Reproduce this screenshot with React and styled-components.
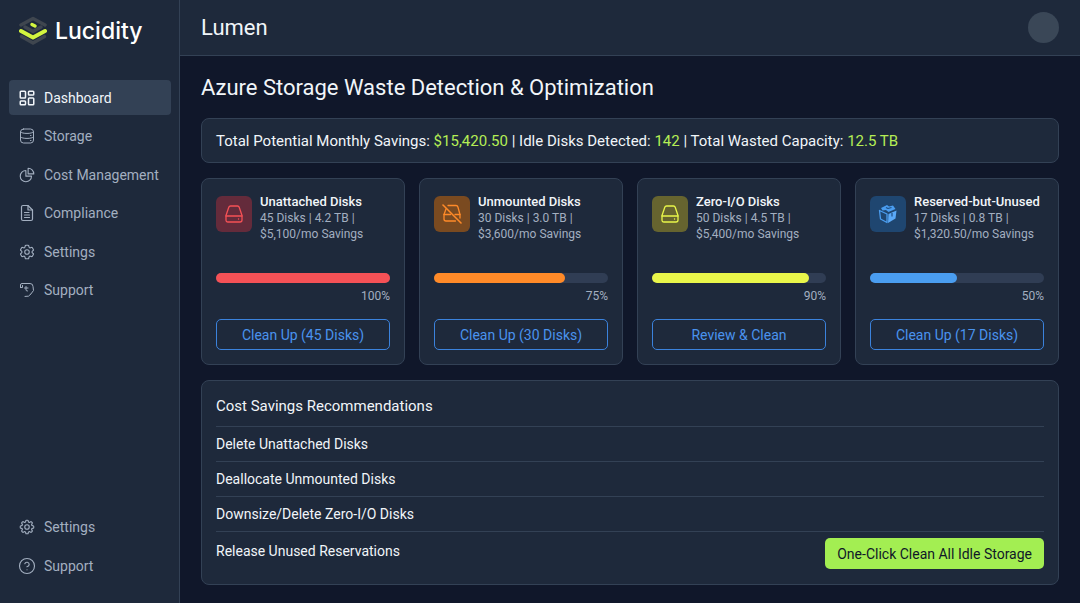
import React from 'react'
import styled, { createGlobalStyle } from 'styled-components';
import { LayoutDashboard, CircleHelp } from 'lucide-react';
import { HiOutlineChartPie, HiOutlineCog6Tooth, HiOutlineCog8Tooth } from 'react-icons/hi2';

const LogoMark = () => (
    <svg width='28' height='30' viewBox='0 0 28 30' fill='none' strokeLinecap='round' strokeLinejoin='round' aria-hidden='true'>
        <path d='M2 9 L14 2.5 L26 9' stroke='#3f464f' strokeWidth='3.5' />
        <path d='M6 11 L14 15.5 L22 11' stroke='#3f464f' strokeWidth='3.5' />
        <path d='M2.500 20.500 L14 27 L25.500 20.500' stroke='#3f464f' strokeWidth='3.5' />
        <path d='M13 8.500 L16 10' stroke='#d3f53f' strokeWidth='3.500' />
        <path d='M2 15 L14 21.500 L26 15' stroke='#d3f53f' strokeWidth='4' />
    </svg>
)

const StorageIcon = () => (
    <svg width='16' height='16' viewBox='0 0 16 16' fill='none' stroke='currentColor' strokeLinecap='round' aria-hidden='true'>
        <rect x='1.500' y='1' width='13' height='14' rx='3' />
        <path d='M1.500 4 C3 6 13 6 14.500 4' />
        <path d='M1.500 9 C3 11 13 11 14.500 9 M11.500 7.500 h.5 M11.500 12.500 h.5' />
    </svg>
)

const DocumentIcon = () => (
    <svg width='14' height='18' viewBox='0 0 14 18' fill='none' stroke='currentColor' strokeWidth='1.2' strokeLinecap='round' strokeLinejoin='round' aria-hidden='true'>
        <path d='M8 1.500 H3 Q1.500 1.500 1.500 3 V15 Q1.500 16.500 3 16.500 H11 Q12.500 16.500 12.500 15 V6 Z' />
        <path d='M8 1.500 V6 H12.500 M4.500 8.500 H9 M4.500 11 H9.500 M4.500 13.500 H9.500' />
    </svg>
)

const HeadsetIcon = () => (
    <svg width='16' height='16' viewBox='0 0 16 16' fill='none' stroke='currentColor' strokeLinecap='round' strokeLinejoin='round' aria-hidden='true'>
        <path d='M1.500 5.500 V3 Q1.500 1.500 3 1.500 H11 Q14 1.500 14 4.500 L14.500 8.500 L11.500 12.500' />
        <path d='M1.500 5.500 H3.500 V3.500 M7 4.500 V8 Q7 9 8.500 9 M5.500 6 H9' />
        <path d='M11.500 12.500 Q10.500 15 6 14.500' />
    </svg>
)

const DriveIcon = () => (
    <svg width='18' height='18' viewBox='0 0 18 18' fill='none' stroke='currentColor' strokeWidth='1.300' strokeLinecap='round' strokeLinejoin='round' aria-hidden='true'>
        <path d='M5.500 1 H12.500 Q13.800 1 14.200 2.200 L17 10.500 V15 Q17 17 15 17 H3 Q1 17 1 15 V10.500 L3.800 2.200 Q4.200 1 5.500 1 Z' />
        <path d='M1 11 H17 M13.500 14 h.1' />
    </svg>
)

const DriveOffIcon = () => (
    <svg width='20' height='20' viewBox='0 0 20 20' fill='none' stroke='currentColor' strokeWidth='1.300' strokeLinecap='round' strokeLinejoin='round' aria-hidden='true'>
        <path d='M1 1 L19 19' strokeWidth='1.600' />
        <path d='M6 1.500 H14 Q15.500 1.500 15.900 3 L18 10.500 V14' />
        <path d='M4 5 L2 10.500 V15 Q2 17 4 17 H13.500' />
        <path d='M2 10.500 H8.500 M13 10.500 H18' />
    </svg>
)

const CubeIcon = () => (
    <svg width='20' height='20' viewBox='0 0 20 20' fill='none' strokeLinejoin='round' aria-hidden='true'>
        <path d='M1.500 6.500 L9 10 V18.500 L2.500 15 Z' stroke='#4a9df0' strokeWidth='1.300' />
        <path d='M10.500 10 L18.500 6.500 L17.500 14.500 L10 19 Z' fill='#5aa9f8' />
        <path d='M3 4 L9 1 L11 2.500 L15 1.500 L17.500 5 L10.500 8 L8 6 L4.500 6.500 Z' fill='#4a9df0' />
        <path d='M8 3.500 L10 4.500 L13.500 3.500 M14 9 V12.500' stroke='#1f4f85' strokeWidth='1.200' />
    </svg>
)

const mainLinks = [
    { label: 'Dashboard', icon: <LayoutDashboard size={18} strokeWidth={2} />, active: true },
    { label: 'Storage', icon: <StorageIcon /> },
    { label: 'Cost Management', icon: <HiOutlineChartPie size={18} /> },
    { label: 'Compliance', icon: <DocumentIcon /> },
    { label: 'Settings', icon: <HiOutlineCog6Tooth size={18} /> },
    { label: 'Support', icon: <HeadsetIcon /> },
];

const footerLinks = [
    { label: 'Settings', icon: <HiOutlineCog8Tooth size={18} /> },
    { label: 'Support', icon: <CircleHelp size={18} strokeWidth={1.5} /> },
];

const wasteCards = [
    { title: 'Unattached Disks', disks: 45, size: '4.2 TB', savings: '$5,100', percent: 100, action: 'Clean Up (45 Disks)', color: '#f55156', tile: '#642b3b', icon: <DriveIcon /> },
    { title: 'Unmounted Disks', disks: 30, size: '3.0 TB', savings: '$3,600', percent: 75, action: 'Clean Up (30 Disks)', color: '#ff8a28', tile: '#7a4a20', icon: <DriveOffIcon /> },
    { title: 'Zero-I/O Disks', disks: 50, size: '4.5 TB', savings: '$5,400', percent: 90, action: 'Review & Clean', color: '#e9f64a', tile: '#66642f', icon: <DriveIcon /> },
    { title: 'Reserved-but-Unused', disks: 17, size: '0.8 TB', savings: '$1,320.50', percent: 50, action: 'Clean Up (17 Disks)', color: '#4a9df0', tile: '#1f4670', icon: <CubeIcon /> },
];

const recommendations = [
    'Delete Unattached Disks',
    'Deallocate Unmounted Disks',
    'Downsize/Delete Zero-I/O Disks',
];

const NavItem = ({ item }) => (
    <li>
        <NavLink href='#' $active={item.active} aria-current={item.active ? 'page' : undefined}>
            <NavIcon>{item.icon}</NavIcon>
            {item.label}
        </NavLink>
    </li>
)

const WasteCard = ({ card }) => (
    <Card>
        <CardTop>
            <IconTile $color={card.color} $tile={card.tile}>{card.icon}</IconTile>
            <div>
                <CardTitle>{card.title}</CardTitle>
                <CardText>{card.disks} Disks | {card.size} |<br />{card.savings}/mo Savings</CardText>
            </div>
        </CardTop>
        <Track role='progressbar' aria-label={card.title} aria-valuenow={card.percent} aria-valuemin={0} aria-valuemax={100}>
            <Fill $color={card.color} style={{ width: `${card.percent}%` }} />
        </Track>
        <Percent>{card.percent}%</Percent>
        <OutlineButton type='button'>{card.action}</OutlineButton>
    </Card>
)

const App = () => {
    return (
        <>
            <GlobalStyle />
            <Layout>
                <Sidebar>
                    <Brand><LogoMark />Lucidity</Brand>
                    <nav aria-label='Main'>
                        <MainNav>
                            {mainLinks.map((item) => <NavItem key={item.label} item={item} />)}
                        </MainNav>
                    </nav>
                    <FooterNav>
                        {footerLinks.map((item) => <NavItem key={item.label} item={item} />)}
                    </FooterNav>
                </Sidebar>
                <Page>
                    <Header>
                        <ProductName>Lumen</ProductName>
                        <Avatar type='button' aria-label='Account' />
                    </Header>
                    <Content>
                        <PageTitle>Azure Storage Waste Detection &amp; Optimization</PageTitle>
                        <Summary>
                            Total Potential Monthly Savings: <Highlight>$15,420.50</Highlight> | Idle Disks Detected: <Highlight>142</Highlight> | Total Wasted Capacity: <Highlight>12.5 TB</Highlight>
                        </Summary>
                        <Cards>
                            {wasteCards.map((card) => <WasteCard key={card.title} card={card} />)}
                        </Cards>
                        <Panel>
                            <PanelTitle>Cost Savings Recommendations</PanelTitle>
                            <RecList>
                                {recommendations.map((text) => <RecRow key={text}>{text}</RecRow>)}
                                <LastRow>
                                    Release Unused Reservations
                                    <CleanAll type='button'>One-Click Clean All Idle Storage</CleanAll>
                                </LastRow>
                            </RecList>
                        </Panel>
                    </Content>
                </Page>
            </Layout>
        </>
    )
}

const GlobalStyle = createGlobalStyle`
  * {
    box-sizing: border-box;
  }
  body {
    margin: 0;
    background: #10172a;
    color: #f1f5f9;
    font-family: Roboto, 'Liberation Sans', sans-serif;
    font-size: 14px;
  }
  h1, h2, h3, p, ul {
    margin: 0;
    padding: 0;
    font-weight: 400;
  }
  ul {
    list-style: none;
  }
  button {
    font-family: inherit;
    cursor: pointer;
  }
`;

const Layout = styled.div`
  display: flex;
  min-height: 100vh;
`;

const Sidebar = styled.aside`
  display: flex;
  flex-direction: column;
  flex: 0 0 180px;
  padding: 0 8px 20px 9px;
  background: #1e293b;
  border-right: 1px solid #334155;
`;

const Brand = styled.div`
  display: flex;
  align-items: center;
  gap: 8px;
  height: 62px;
  margin-bottom: 18px;
  padding-left: 10px;
  color: #fff;
  font-family: Inter, 'Liberation Sans', sans-serif;
  font-size: 23px;
  font-weight: 500;
`;

const MainNav = styled.ul`
  display: flex;
  flex-direction: column;
  justify-content: space-between;
  height: 228px;
`;

const FooterNav = styled.ul`
  display: flex;
  flex-direction: column;
  gap: 4px;
  margin-top: auto;
`;

const NavLink = styled.a`
  display: flex;
  align-items: center;
  gap: 8px;
  height: 35px;
  padding-left: 9px;
  border-radius: 4px;
  background: ${({ $active }) => ($active ? '#334155' : 'transparent')};
  color: ${({ $active }) => ($active ? '#f1f5f9' : '#a3afc0')};
  text-decoration: none;
`;

const NavIcon = styled.span`
  display: flex;
  justify-content: center;
  width: 18px;
`;

const Page = styled.div`
  flex: 1;
  min-width: 0;
`;

const Header = styled.header`
  display: flex;
  align-items: center;
  justify-content: space-between;
  height: 56px;
  padding: 0 21px;
  background: #1e293b;
  border-bottom: 1px solid #334155;
`;

const ProductName = styled.div`
  font-size: 22px;
`;

const Avatar = styled.button`
  width: 31px;
  height: 31px;
  padding: 0;
  border: 0;
  border-radius: 50%;
  background: #3a4757;
`;

const Content = styled.main`
  padding: 16px 21px 18px;
`;

const PageTitle = styled.h1`
  margin-bottom: 14px;
  font-size: 22px;
  line-height: 32px;
`;

const Summary = styled.p`
  padding: 13px 14px 12px;
  border: 1px solid #334155;
  border-radius: 8px;
  background: #1e293b;
  font-size: 15px;
  line-height: 18px;
`;

const Highlight = styled.span`
  color: #b5ee55;
`;

const Cards = styled.section`
  display: grid;
  grid-template-columns: repeat(4, minmax(0, 1fr));
  gap: 14px;
  margin: 15px 0;
`;

const Card = styled.article`
  padding: 14px;
  border: 1px solid #334155;
  border-radius: 8px;
  background: #1e293b;
`;

const CardTop = styled.div`
  display: flex;
  gap: 8px;
  min-height: 80px;
  white-space: nowrap;
`;

const IconTile = styled.div`
  display: flex;
  flex: 0 0 36px;
  align-items: center;
  justify-content: center;
  height: 36px;
  margin-top: 3px;
  border-radius: 6px;
  background: ${({ $tile }) => $tile};
  color: ${({ $color }) => $color};
`;

const CardTitle = styled.h2`
  font-size: 13px;
  font-weight: 500;
  line-height: 17px;
`;

const CardText = styled.p`
  color: #a3afc0;
  font-size: 12px;
  line-height: 16px;
`;

const Track = styled.div`
  height: 10px;
  border-radius: 5px;
  background: #303d54;
`;

const Fill = styled.div`
  height: 100%;
  border-radius: 5px;
  background: ${({ $color }) => $color};
`;

const Percent = styled.div`
  margin: 5px 0 15px;
  color: #a3afc0;
  font-size: 12px;
  line-height: 16px;
  text-align: right;
`;

const OutlineButton = styled.button`
  width: 100%;
  height: 31px;
  border: 1px solid #3b82dc;
  border-radius: 5px;
  background: transparent;
  color: #4a93ee;
  font-size: 14px;
`;

const Panel = styled.section`
  padding: 14px 14px 15px;
  border: 1px solid #334155;
  border-radius: 8px;
  background: #1e293b;
`;

const PanelTitle = styled.h2`
  padding-bottom: 9px;
  font-size: 15px;
  line-height: 22px;
`;

const RecList = styled.ul`
  font-size: 14px;
  line-height: 34px;
`;

const RecRow = styled.li`
  border-top: 1px solid #334155;
`;

const LastRow = styled(RecRow)`
  display: flex;
  align-items: flex-start;
  justify-content: space-between;
  padding-top: 2px;
`;

const CleanAll = styled.button`
  height: 31px;
  margin-top: 4px;
  padding: 0 12px;
  border: 0;
  border-radius: 5px;
  background: #a3ee52;
  color: #101828;
  font-size: 14px;
`;

export default App;
